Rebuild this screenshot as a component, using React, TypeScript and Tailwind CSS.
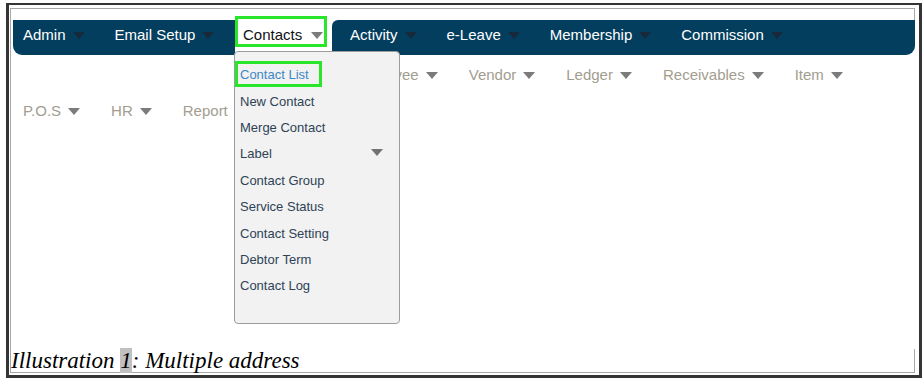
import React from "react";

const topMenu = ["Activity", "e-Leave", "Membership", "Commission"];
const rowTwo = ["Employee", "Vendor", "Ledger", "Receivables", "Item"];
const rowThree = ["P.O.S", "HR", "Report"];
const contactMenu = [
  "Contact List",
  "New Contact",
  "Merge Contact",
  "Label",
  "Contact Group",
  "Service Status",
  "Contact Setting",
  "Debtor Term",
  "Contact Log",
];

function Caret({ tone }: { tone: string }) {
  return <span className={"inline-block h-0 w-0 border-x-[6px] border-t-[7px] border-x-transparent " + tone} />;
}

function MenuItem({ label, dark }: { label: string; dark?: boolean }) {
  return (
    <div className={"flex shrink-0 items-center " + (dark ? "mr-[30px]" : "mr-[31px]")}>
      <span>{label}</span>
      <span className="ml-[7px] flex">
        <Caret tone={dark ? "border-t-[#17293a]" : "border-t-[#7b7b7b]"} />
      </span>
    </div>
  );
}

function ContactsDropdown() {
  return (
    <div className="absolute left-[-1px] top-[31px] z-10 h-[273px] w-[166px] rounded-[4px] border border-[#9c9c9c] bg-[#f2f2f2] pt-[10px] text-[13px] text-[#2e4356]">
      {contactMenu.map((item, idx) => (
        <div key={item} className="relative flex h-[26.4px] items-center justify-between pl-[5px] pr-[16px]">
          <span className={idx === 0 ? "text-[#3c87c6]" : ""}>{item}</span>
          {item === "Label" && (
            <span className="-mt-[3px] flex">
              <Caret tone="border-t-[#727272]" />
            </span>
          )}
          {idx === 0 && (
            <span className="absolute left-0 top-[-1px] h-[26px] w-[87px] border-[3px] border-[#2ae62a]" />
          )}
        </div>
      ))}
    </div>
  );
}

export default function App() {
  return (
    <div className="min-h-screen bg-white font-['Liberation_Sans',Arial,sans-serif]">
      <div className="ml-[6px] mt-[3px] h-[375px] w-[916px] border-x-[3px] border-b-[3px] border-t-2 border-[#353535] pb-[2px] pl-[1px] pr-[4px] pt-[3px]">
        <div className="flex h-full flex-col border-b border-l border-t border-[#a8a8a8]">
          <div className="relative h-[340px]">
            <div className="h-[11px] border-r border-[#a8a8a8]" />

            {/* main nav */}
            <div className="ml-[2px] flex h-[35px] text-[15px] leading-[18px]">
              <div className="flex w-[222px] items-start rounded-bl-[9px] bg-[#033e5e] pl-[10px] pt-[6px] text-white">
                <MenuItem label="Admin" dark />
                <MenuItem label="Email Setup" dark />
              </div>
              <div className="relative w-[97px] bg-white pl-[8px] pt-[6px] text-[#111]">
                <div className="flex items-center">
                  <span>Contacts</span>
                  <span className="ml-[9px] flex">
                    <Caret tone="border-t-[#7b7b7b]" />
                  </span>
                </div>
                <span className="absolute left-0 top-[-4px] h-[31px] w-[92px] border-[3px] border-[#2ae62a]" />
                <ContactsDropdown />
              </div>
              <div className="flex flex-1 items-start rounded-br-[9px] rounded-tl-[6px] bg-[#033e5e] pl-[18px] pt-[6px] text-white">
                {topMenu.map((m) => (
                  <MenuItem key={m} label={m} dark />
                ))}
              </div>
            </div>

            {/* wrapped rows, partly behind the dropdown */}
            <div className="mt-[11px] flex pl-[341px] text-[15px] leading-[18px] text-[#a29d8f]">
              {rowTwo.map((m) => (
                <MenuItem key={m} label={m} />
              ))}
            </div>
            <div className="mt-[18px] flex pl-[12px] text-[15px] leading-[18px] text-[#a29d8f]">
              {rowThree.map((m) => (
                <MenuItem key={m} label={m} />
              ))}
            </div>
          </div>

          <div className="h-[23px] border-r border-[#a8a8a8] font-['Liberation_Serif',serif] text-[23px] italic leading-[23px] text-black">
            Illustration <span className="bg-[#c0c0c0]">1</span>: Multiple address
          </div>
        </div>
      </div>
    </div>
  );
}
